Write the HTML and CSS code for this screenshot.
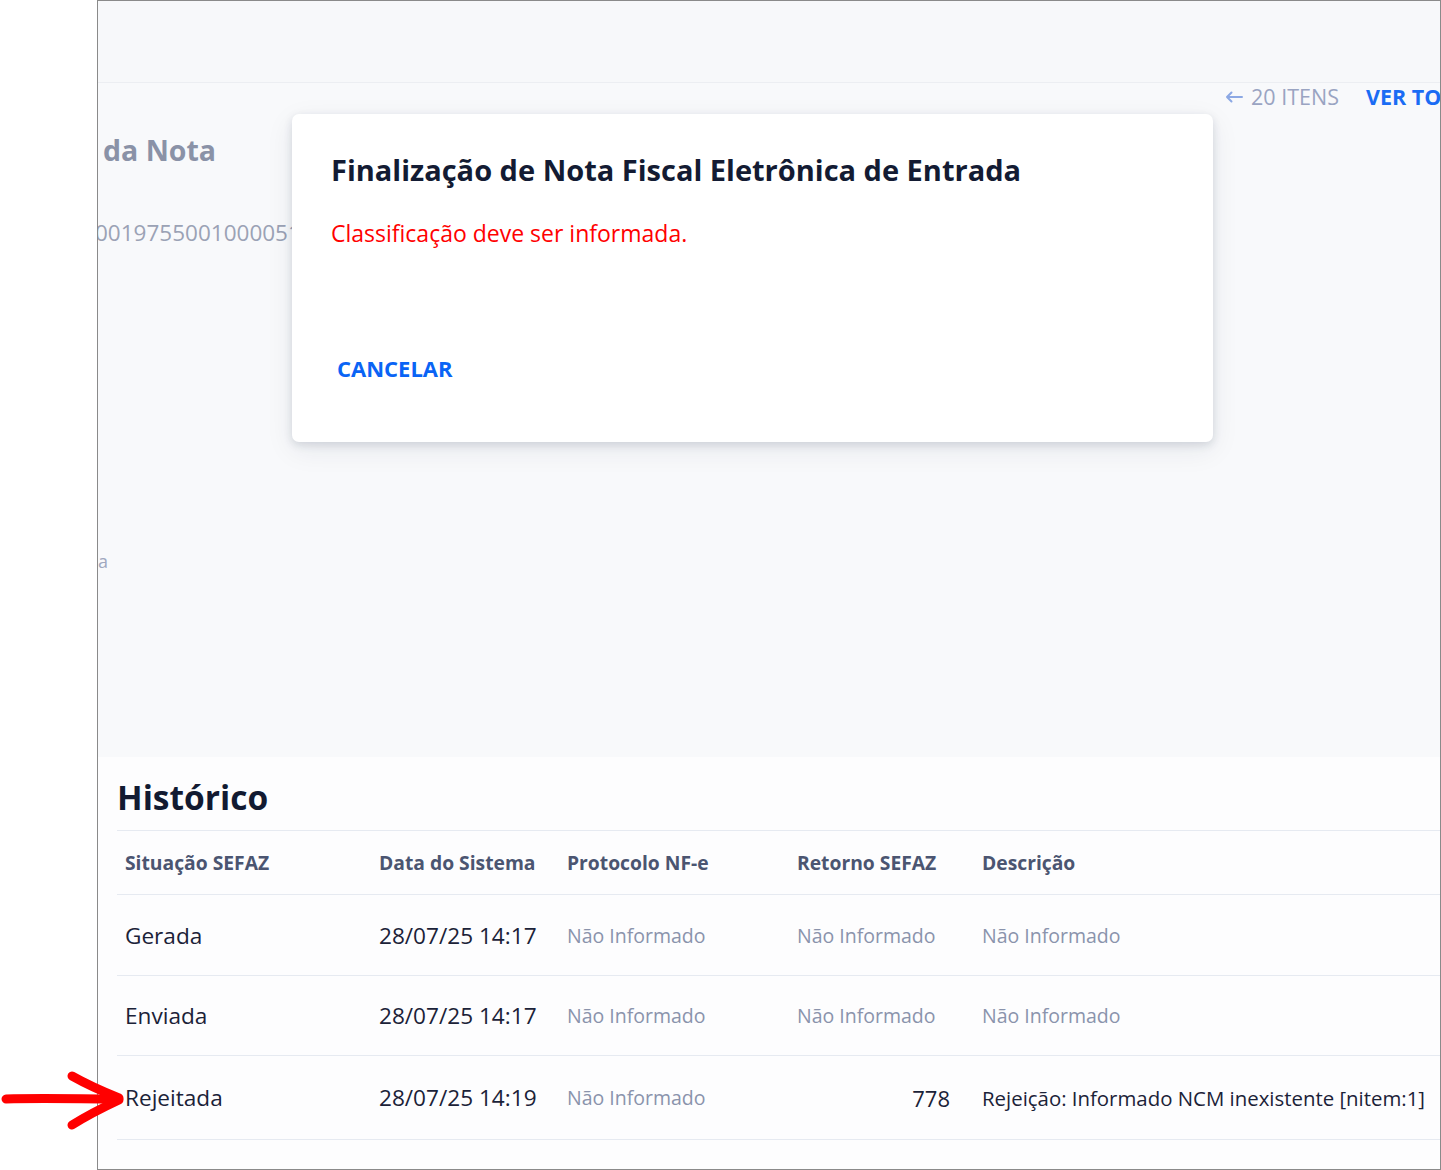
FILE: index.html
```html
<!DOCTYPE html>
<html lang="pt-BR">
<head>
<meta charset="utf-8">
<title>Nota Fiscal Eletrônica de Entrada</title>
<link rel="stylesheet" href="styles.css">
</head>
<body>
<div class="stage">
  <svg class="pointer" width="124" height="60" viewBox="0 0 124 60" aria-hidden="true">
    <path d="M4 28 C 40 27, 80 28, 112 28" />
    <path d="M70 5 C 86 14, 102 21, 117 27" />
    <path d="M117 29 C 102 36, 86 44, 70 54" />
  </svg>

  <div class="frame">
    <header class="topbar"></header>

    <section class="note-card">
      <nav class="items-nav">
        <span class="items-back">
          <svg class="back-arrow" width="18" height="12" viewBox="0 0 18 12" aria-hidden="true">
            <path d="M17 6 H2 M6.5 1.5 L2 6 L6.5 10.5" />
          </svg>
          20 ITENS
        </span>
        <a class="see-all">VER TODOS</a>
      </nav>
      <h2 class="note-title">da Nota</h2>
      <div class="note-key">0019755001000051</div>
      <div class="note-field">a</div>

      <div class="modal" role="dialog">
        <h3 class="modal-title">Finalização de Nota Fiscal Eletrônica de Entrada</h3>
        <p class="modal-error">Classificação deve ser informada.</p>
        <div class="modal-actions">
          <button class="btn-text">CANCELAR</button>
        </div>
      </div>
    </section>

    <section class="history">
      <h2 class="history-title">Histórico</h2>
      <div class="grid">
        <div class="row head">
          <div class="cell">Situação SEFAZ</div>
          <div class="cell">Data do Sistema</div>
          <div class="cell">Protocolo NF-e</div>
          <div class="cell">Retorno SEFAZ</div>
          <div class="cell">Descrição</div>
        </div>
        <div class="row">
          <div class="cell">Gerada</div>
          <div class="cell">28/07/25 14:17</div>
          <div class="cell muted">Não Informado</div>
          <div class="cell muted">Não Informado</div>
          <div class="cell muted">Não Informado</div>
        </div>
        <div class="row">
          <div class="cell">Enviada</div>
          <div class="cell">28/07/25 14:17</div>
          <div class="cell muted">Não Informado</div>
          <div class="cell muted">Não Informado</div>
          <div class="cell muted">Não Informado</div>
        </div>
        <div class="row">
          <div class="cell">Rejeitada</div>
          <div class="cell">28/07/25 14:19</div>
          <div class="cell muted">Não Informado</div>
          <div class="cell num">778</div>
          <div class="cell desc">Rejeição: Informado NCM inexistente [nitem:1]</div>
        </div>
      </div>
    </section>
  </div>
</div>
</body>
</html>
```

FILE: styles.css
```css
* { box-sizing: border-box; }

html, body {
  margin: 0;
  padding: 0;
  background: #ffffff;
  font-family: "Open Sans", "Noto Sans", "Liberation Sans", sans-serif;
}

.stage {
  position: relative;
  width: 1441px;
  height: 1170px;
}

/* red hand-drawn pointer on the left margin */
.pointer {
  position: absolute;
  left: 2px;
  top: 1071px;
  z-index: 5;
  overflow: visible;
}
.pointer path {
  fill: none;
  stroke: #ff0000;
  stroke-width: 9;
  stroke-linecap: round;
  stroke-linejoin: round;
}

.frame {
  margin-left: 97px;
  width: 1344px;
  height: 1170px;
  border: 1px solid #8a8a8a;
  overflow: hidden;
  background: #f8f9fb;
}

.topbar {
  height: 82px;
  background: #f7f8fa;
  border-bottom: 1px solid #eceef2;
}

/* upper card, dimmed behind the dialog */
.note-card {
  position: relative;
  height: 674px;
  background: #f8f9fb;
}

.items-nav {
  display: flex;
  align-items: center;
  gap: 27px;
  height: 28px;
  padding-left: 1127px;
  white-space: nowrap;
  font-size: 21.5px;
  line-height: 28px;
}
.items-back {
  display: flex;
  align-items: center;
  gap: 8px;
  color: #9aa4c2;
}
.back-arrow path {
  fill: none;
  stroke: #8ca8e4;
  stroke-width: 2;
  stroke-linecap: round;
  stroke-linejoin: round;
}
.see-all { color: #1a6cf4; font-weight: 700; }

.note-title {
  margin: 20px 0 0 5px;
  font-size: 28.5px;
  line-height: 38px;
  font-weight: 700;
  color: #8a92a7;
}

.note-key {
  margin: 50px 0 0 -3px;
  font-size: 22.5px;
  line-height: 28px;
  color: #9ba2b5;
  white-space: nowrap;
}

.note-field {
  margin-top: 302px;
  font-size: 18px;
  line-height: 24px;
  color: #a0a8bf;
}

.modal {
  position: absolute;
  left: 194px;
  top: 31px;
  width: 921px;
  height: 328px;
  padding: 37px 39px 0;
  background: #ffffff;
  border-radius: 7px;
  box-shadow: 0 3px 8px rgba(30, 40, 70, 0.14), 0 8px 28px rgba(30, 40, 70, 0.08);
}

.modal-title {
  margin: 0;
  font-size: 29px;
  line-height: 38px;
  font-weight: 700;
  color: #131b33;
}

.modal-error {
  margin: 29px 0 0;
  font-size: 23px;
  line-height: 30px;
  color: #ff0000;
}

.modal-actions {
  margin-top: 102px;
  display: flex;
}

.btn-text {
  border: 0;
  background: none;
  padding: 0 6px;
  height: 36px;
  font-family: inherit;
  font-size: 22px;
  font-weight: 700;
  color: #0a64f5;
  cursor: pointer;
}

/* history card */
.history {
  height: 413px;
  background: #fdfdfe;
  padding: 18px 0 0 19px;
}

.history-title {
  margin: 0;
  font-size: 33.5px;
  line-height: 44px;
  font-weight: 700;
  color: #121a31;
}

.grid {
  margin-top: 11px;
  border-top: 1px solid #e6eaf1;
}

.row {
  display: grid;
  grid-template-columns: 254px 188px 230px 185px 1fr;
  align-items: center;
  height: 80px;
  border-bottom: 1px solid #e6eaf1;
  font-size: 22.6px;
  color: #1b2238;
  white-space: nowrap;
}
.row:nth-child(2) { height: 81px; }
.row:last-child { height: 84px; }

.row.head {
  height: 64px;
  font-size: 19.3px;
  font-weight: 700;
  color: #4b5571;
}

.cell { padding: 0 8px; }
.cell.muted { color: #8a93ac; font-size: 19.5px; }
.cell.num { text-align: right; padding-right: 24px; font-size: 22px; }
.cell.desc { font-size: 20.4px; }
```
